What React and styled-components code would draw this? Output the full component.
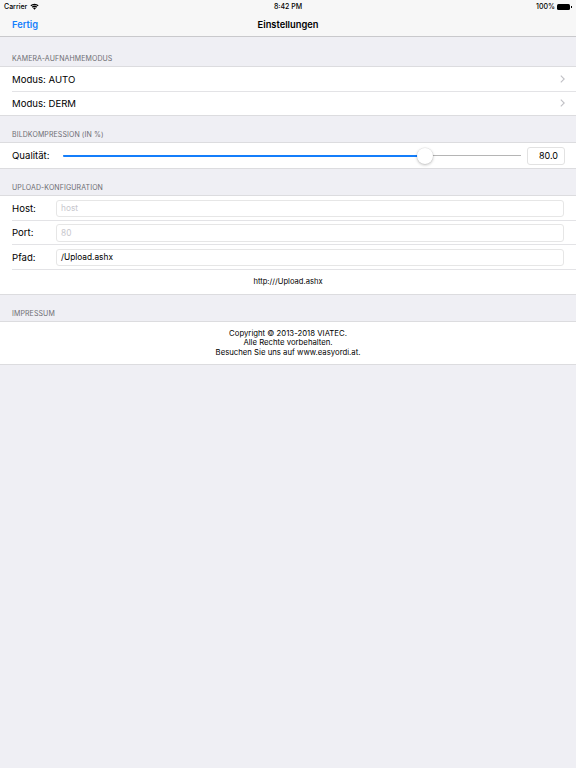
import React from "react";
import styled, { createGlobalStyle } from "styled-components";

const Global = createGlobalStyle`
  html, body { margin: 0; padding: 0; background: #efeff4; }
  body { font-family: Inter, "Liberation Sans", Roboto, sans-serif; color: #000; }
  * { box-sizing: border-box; }
`;

const Page = styled.div`
  width: 576px;
  min-height: 768px;
  background: #efeff4;
  display: flex;
  flex-direction: column;
`;

const TopBar = styled.div`
  background: #f7f7f7;
  border-bottom: 1px solid #c9c9cc;
  height: 37px;
  display: flex;
  flex-direction: column;
`;

const StatusBar = styled.div`
  height: 13px;
  display: grid;
  grid-template-columns: 1fr auto 1fr;
  align-items: center;
  padding: 0 4px;
  font-size: 7px;
  font-weight: 500;
`;

const StatusLeft = styled.div`
  display: flex;
  align-items: center;
  gap: 3px;
`;

const StatusRight = styled.div`
  display: flex;
  align-items: center;
  justify-content: flex-end;
  gap: 2px;
`;

const Battery = styled.div`
  display: flex;
  align-items: center;
  gap: 1px;
  &::before {
    content: "";
    width: 13px;
    height: 6px;
    border-radius: 1.5px;
    background: #000;
  }
  &::after {
    content: "";
    width: 1px;
    height: 2px;
    background: #000;
  }
`;

const NavBar = styled.div`
  flex: 1;
  display: grid;
  grid-template-columns: 1fr auto 1fr;
  align-items: center;
  padding: 0 12px;
  margin-top: -1px;
`;

const NavButton = styled.div`
  color: #147efb;
  font-size: 9.3px;
  font-weight: 600;
`;

const NavTitle = styled.div`
  font-size: 9.3px;
  font-weight: 600;
`;

const SectionHeader = styled.div`
  height: ${(p) => p.$h || 26}px;
  display: flex;
  align-items: flex-end;
  padding: 0 12px 3px;
  font-size: 7px;
  color: #6d6d72;
  letter-spacing: 0.1px;
  text-transform: uppercase;
`;

const Group = styled.div`
  background: #fff;
  border-top: 1px solid #dcdcdf;
  border-bottom: 1px solid #dcdcdf;
  display: flex;
  flex-direction: column;
`;

const Row = styled.div`
  height: ${(p) => p.$h || 24.5}px;
  display: flex;
  align-items: center;
  padding: 0 12px;
  position: relative;
  gap: 8px;
  ${(p) =>
    p.$sep &&
    `&::after {
      content: "";
      position: absolute;
      left: 12px;
      right: 0;
      bottom: 0;
      height: 1px;
      background: #e3e3e6;
    }`}
`;

const Label = styled.div`
  font-size: 9.6px;
  flex: ${(p) => (p.$grow ? 1 : "none")};
  width: ${(p) => (p.$w ? `${p.$w}px` : "auto")};
`;

const Chevron = styled.svg`
  width: 5px;
  height: 8px;
  margin-right: -1px;
`;

const SliderWrap = styled.div`
  flex: 1;
  height: 16px;
  position: relative;
  display: flex;
  align-items: center;
  margin-left: 5px;
  margin-right: -4px;
`;

const Track = styled.div`
  flex: 1;
  height: 1px;
  background: #b5b5b5;
  position: relative;
`;

const Fill = styled.div`
  height: 2px;
  margin-top: -0.5px;
  background: #147efb;
  border-radius: 1px;
`;

const Thumb = styled.div`
  position: absolute;
  top: 0;
  width: 16px;
  height: 16px;
  border-radius: 50%;
  background: #fff;
  box-shadow: 0 1px 3px rgba(0, 0, 0, 0.25), 0 0 0 0.5px rgba(0, 0, 0, 0.08);
`;

const ValueBox = styled.div`
  width: 38px;
  height: 18px;
  border: 1px solid #e2e2e2;
  border-radius: 3px;
  display: flex;
  align-items: center;
  justify-content: flex-end;
  padding-right: 6px;
  font-size: 9px;
  margin-left: 2px;
  margin-right: -1px;
`;

const Field = styled.div`
  flex: 1;
  height: 17.5px;
  border: 1px solid #e6e6e6;
  border-radius: 3px;
  display: flex;
  align-items: center;
  padding-left: 4px;
  font-size: 8.3px;
  color: ${(p) => (p.$placeholder ? "#c7c7cd" : "#000")};
`;

const CenterText = styled.div`
  flex: 1;
  text-align: center;
  font-size: 7.6px;
  line-height: 9.5px;
`;

const Impressum = styled.div`
  padding: 7px 12px 6px;
  text-align: center;
  font-size: 7.75px;
  line-height: 9.7px;
`;

const WifiIcon = () => (
  <svg width="9" height="7" viewBox="0 0 18 13">
    <path d="M9 13 L6.2 10 A4 4 0 0 1 11.8 10 Z" fill="#000" />
    <path d="M3.6 7.2 A7.6 7.6 0 0 1 14.4 7.2 L12.6 9.2 A5 5 0 0 0 5.4 9.2 Z" fill="#000" />
    <path d="M0.8 4.2 A11.6 11.6 0 0 1 17.2 4.2 L15.4 6.2 A9 9 0 0 0 2.6 6.2 Z" fill="#000" />
  </svg>
);

const ChevronIcon = () => (
  <Chevron viewBox="0 0 5 8">
    <path d="M0.8 0.6 L4.2 4 L0.8 7.4" fill="none" stroke="#c0c0c5" strokeWidth="1.1" />
  </Chevron>
);

const Slider = ({ value, min, max }) => {
  const frac = (value - min) / (max - min);
  return (
    <SliderWrap>
      <Track>
        <Fill style={{ width: `calc(8px + ${frac} * (100% - 16px))` }} />
      </Track>
      <Thumb style={{ left: `calc(${frac} * (100% - 16px))` }} />
    </SliderWrap>
  );
};

export default function App() {
  return (
    <Page>
      <Global />
      <TopBar>
        <StatusBar>
          <StatusLeft>
            <span>Carrier</span>
            <WifiIcon />
          </StatusLeft>
          <div>8:42 PM</div>
          <StatusRight>
            <span>100%</span>
            <Battery />
          </StatusRight>
        </StatusBar>
        <NavBar>
          <NavButton>Fertig</NavButton>
          <NavTitle>Einstellungen</NavTitle>
          <div />
        </NavBar>
      </TopBar>

      <SectionHeader $h={29}>Kamera-Aufnahmemodus</SectionHeader>
      <Group>
        <Row $sep>
          <Label $grow>Modus: AUTO</Label>
          <ChevronIcon />
        </Row>
        <Row $h={23.5}>
          <Label $grow>Modus: DERM</Label>
          <ChevronIcon />
        </Row>
      </Group>

      <SectionHeader>Bildkompression (in %)</SectionHeader>
      <Group>
        <Row $h={25}>
          <Label>Qualität:</Label>
          <Slider value={80} min={0} max={100} />
          <ValueBox>80.0</ValueBox>
        </Row>
      </Group>

      <SectionHeader>Upload-Konfiguration</SectionHeader>
      <Group>
        <Row $sep>
          <Label $w={36}>Host:</Label>
          <Field $placeholder>host</Field>
        </Row>
        <Row $sep>
          <Label $w={36}>Port:</Label>
          <Field $placeholder>80</Field>
        </Row>
        <Row $sep>
          <Label $w={36}>Pfad:</Label>
          <Field>/Upload.ashx</Field>
        </Row>
        <Row $h={24}>
          <CenterText>http:///Upload.ashx</CenterText>
        </Row>
      </Group>

      <SectionHeader>Impressum</SectionHeader>
      <Group>
        <Impressum>
          Copyright © 2013-2018 VIATEC.
          <br />
          Alle Rechte vorbehalten.
          <br />
          Besuchen Sie uns auf www.easyordi.at.
        </Impressum>
      </Group>
    </Page>
  );
}
